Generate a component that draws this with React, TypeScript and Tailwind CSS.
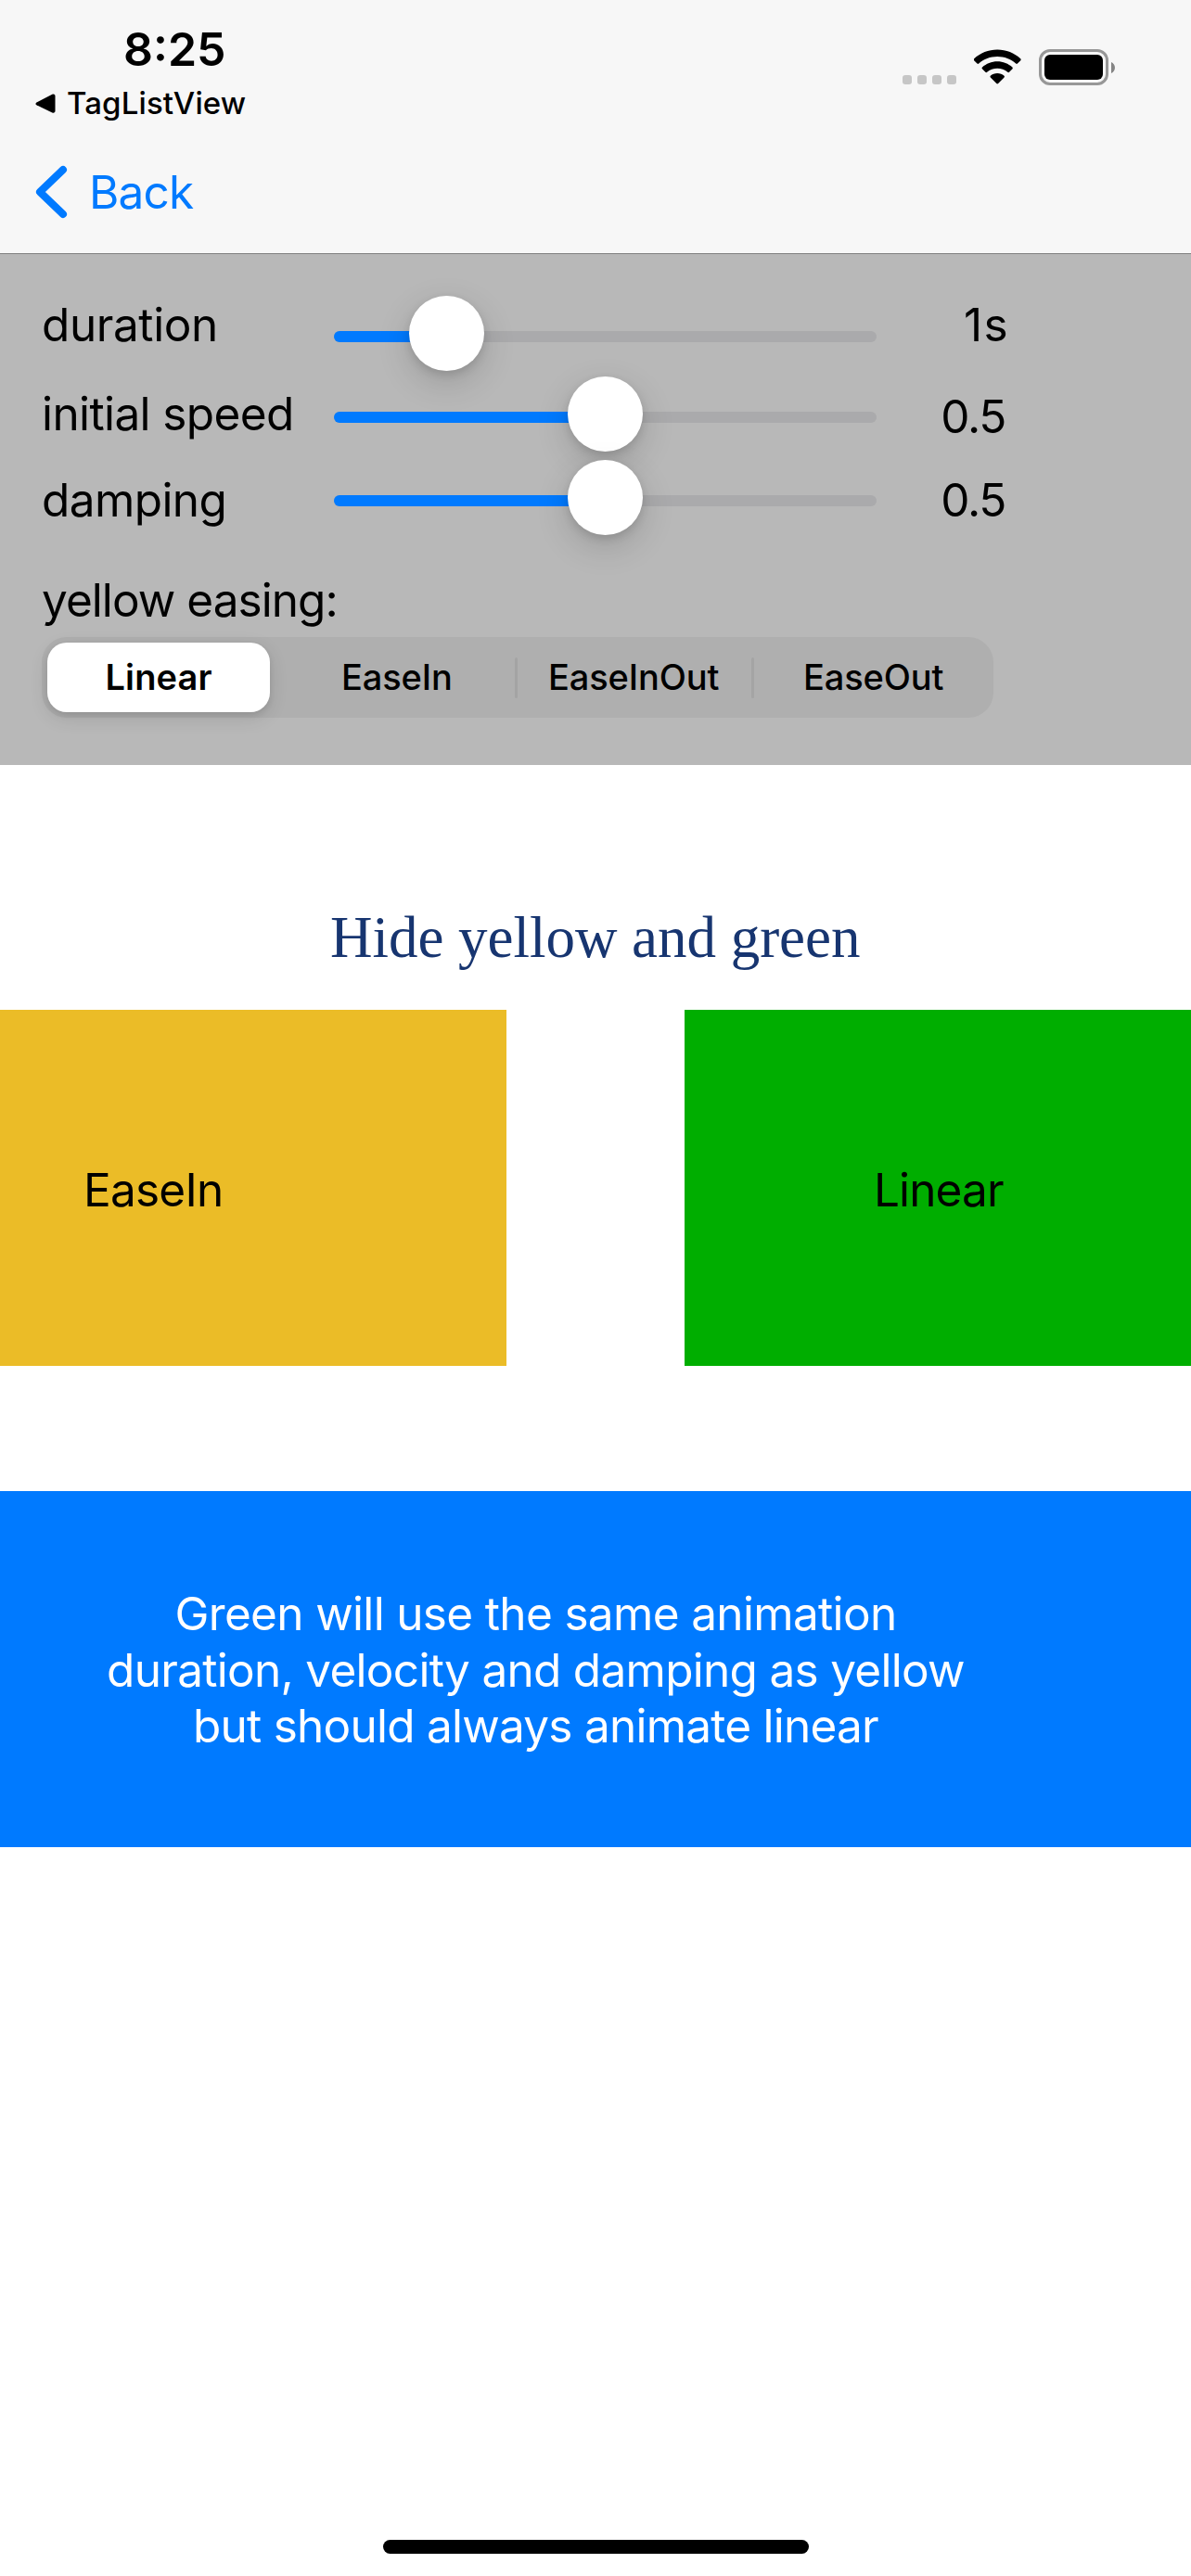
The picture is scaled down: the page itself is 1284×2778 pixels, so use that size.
import type { ReactNode } from 'react';

function WifiIcon() {
  return (
    <svg className="h-[38px] w-[51px]" viewBox="0 0 51 38">
      <path d="M25.2 0.6C34.8 0.6 43.6 4.3 50.2 10.3C50.8 10.9 50.8 11.6 50.3 12.2L46.9 15.6C46.4 16.1 45.8 16.1 45.2 15.6C39.8 10.8 32.9 8.1 25.2 8.1C17.5 8.1 10.6 10.8 5.2 15.6C4.6 16.1 4 16.1 3.5 15.6L0.1 12.2C-0.4 11.6 -0.4 10.9 0.2 10.3C6.8 4.3 15.6 0.6 25.2 0.6Z" />
      <path d="M25.2 13.3C31.4 13.3 37.1 15.7 41.4 19.5C42 20.1 42 20.7 41.5 21.3L38 24.8C37.4 25.3 36.9 25.3 36.3 24.8C33.3 22.2 29.4 20.7 25.2 20.7C21 20.7 17.1 22.2 14.1 24.8C13.5 25.3 13 25.3 12.4 24.8L8.9 21.3C8.4 20.7 8.4 20.1 9 19.5C13.3 15.7 19 13.3 25.2 13.3Z" />
      <path d="M25.2 26C28 26 30.6 27 32.6 28.8C33.1 29.3 33.1 29.9 32.6 30.4L26.1 37C25.5 37.6 24.9 37.6 24.3 37L17.8 30.4C17.3 29.9 17.3 29.3 17.8 28.8C19.8 27 22.4 26 25.2 26Z" />
    </svg>
  );
}

function Battery() {
  return (
    <div className="flex items-center gap-[3px]">
      <div className="h-[39px] w-[75px] rounded-[12px] border-[3px] border-[#979797] p-[3px]">
        <div className="h-full w-full rounded-[6px] bg-black" />
      </div>
      <svg className="h-3 w-1" viewBox="0 0 4 12">
        <path d="M0 0C2.5 1.2 4 3.4 4 6C4 8.6 2.5 10.8 0 12Z" fill="#858585" />
      </svg>
    </div>
  );
}

function Slider({ thumbLeft, className }: { thumbLeft: number; className: string }) {
  return (
    <div className={`relative h-3 w-[585px] shrink-0 rounded-full bg-[#aaaaac] ${className}`}>
      <div className="h-3 rounded-full bg-[#007aff]" style={{ width: thumbLeft + 40 }} />
      <div
        className="absolute -top-[38px] h-[81px] w-[81px] rounded-full bg-white shadow-[0_12px_36px_rgba(0,0,0,0.16),0_4px_10px_rgba(0,0,0,0.12)]"
        style={{ left: thumbLeft }}
      />
    </div>
  );
}

function Row({ className, children }: { className: string; children: ReactNode }) {
  return <div className={`flex items-start ${className}`}>{children}</div>;
}

export default function App() {
  return (
    <div className="flex h-[2778px] w-[1284px] flex-col overflow-hidden bg-white font-[Inter,sans-serif] text-[49.5px] leading-[60px] text-black">
      <header className="flex h-[273px] items-start justify-between bg-[#f7f7f7] pt-[23px]">
        <div>
          <div className="pl-[133px] text-[50px] font-semibold">8:25</div>
          <div className="mt-2 flex h-10 items-center pl-[38px]">
            <svg className="mt-[1px] h-[22px] w-[22px]" viewBox="0 0 22 22">
              <path d="M1.4 9.4L18.3 0.8C20 0 21.5 0.8 21.5 2.6V18.6C21.5 20.4 20 21.2 18.3 20.4L1.4 12.2C0.1 11.5 0.1 10.1 1.4 9.4Z" />
            </svg>
            <span className="ml-3 text-[33px] leading-10 font-medium tracking-[0.12px]">TagListView</span>
          </div>
          <div className="mt-[46px] flex items-center pl-[38px] text-[#007aff]">
            <svg className="h-[58px] w-[36px]" viewBox="0 0 36 58" fill="none" stroke="currentColor" strokeWidth="8" strokeLinecap="round" strokeLinejoin="round">
              <path d="M30 5L5 29L30 53" />
            </svg>
            <span className="ml-[22px] tracking-[-0.8px]">Back</span>
          </div>
        </div>
        <div className="mt-[30px] flex items-start pr-[82px]">
          <div className="mt-[28px] flex gap-[6px]">
            {[0, 1, 2, 3].map((i) => (
              <div key={i} className="h-[10px] w-[10px] rounded-[3px] bg-[#c6c6c6]" />
            ))}
          </div>
          <div className="mr-[19px] ml-[19px]">
            <WifiIcon />
          </div>
          <Battery />
        </div>
      </header>

      <section className="h-[552px] border-t border-[#808080] bg-[#b8b8b8] pt-[46px] pl-[45px]">
        <Row className="h-24">
          <span className="w-[315px] tracking-[-0.41px]">duration</span>
          <Slider thumbLeft={81} className="mt-[37px]" />
          <span className="w-[143px] text-right tracking-[1.4px]">1s</span>
        </Row>
        <Row className="h-[93px]">
          <span className="w-[315px] tracking-[-0.6px]">initial speed</span>
          <Slider thumbLeft={252} className="mt-[28px]" />
          <span className="mt-[3px] w-[139px] text-right tracking-[-1.27px]">0.5</span>
        </Row>
        <Row className="h-[108px]">
          <span className="w-[315px] tracking-[-0.58px]">damping</span>
          <Slider thumbLeft={252} className="mt-[25px]" />
          <span className="w-[139px] text-right tracking-[-1.27px]">0.5</span>
        </Row>
        <div className="tracking-[-0.95px]">yellow easing:</div>
        <div className="mt-[10px] flex h-[87px] w-[1026px] items-center rounded-[27px] bg-[#afafaf] text-[38px] leading-[74px] font-medium">
          <div className="ml-[6px] h-[75px] w-[240px] rounded-[21px] bg-white pl-[62.5px] font-semibold tracking-[0.13px] shadow-[0_6px_20px_rgba(0,0,0,0.12),0_3px_6px_rgba(0,0,0,0.08)]">
            Linear
          </div>
          <div className="h-[75px] w-[264px] pl-[77px] tracking-[-0.13px]">EaseIn</div>
          <div className="h-11 w-[3px] rounded-full bg-[#a4a4a4]" />
          <div className="h-[75px] w-[252px] pl-[33px] tracking-[-0.12px]">EaseInOut</div>
          <div className="h-11 w-[3px] rounded-full bg-[#a4a4a4]" />
          <div className="h-[75px] pl-[53px] tracking-[-0.13px]">EaseOut</div>
        </div>
      </section>

      <main>
        <div className="mt-[150px] pl-[356px] font-['Liberation_Serif',serif] text-[63px] leading-[72px] tracking-[-0.03px] text-[#173570]">
          Hide yellow and green
        </div>
        <div className="mt-[42px] flex h-[384px] justify-between">
          <div className="w-[546px] bg-[#ebbc27] pt-[164px] pl-[90px] tracking-[-0.77px]">EaseIn</div>
          <div className="w-[546px] bg-[#00ae00] pt-[164px] pl-[204px] tracking-[-0.87px]">Linear</div>
        </div>
        <div className="mt-[135px] h-[384px] bg-[#007aff] pt-[102px] leading-[60.67px] text-white">
          <div className="flex w-[1155px] flex-col items-center whitespace-nowrap">
            <span className="tracking-[-0.66px]">Green will use the same animation</span>
            <span className="tracking-[-0.71px]">duration, velocity and damping as yellow</span>
            <span className="tracking-[-0.76px]">but should always animate linear</span>
          </div>
        </div>
      </main>

      <div className="mt-auto mb-6 h-[15px] w-[459px] self-center rounded-full bg-black" />
    </div>
  );
}
